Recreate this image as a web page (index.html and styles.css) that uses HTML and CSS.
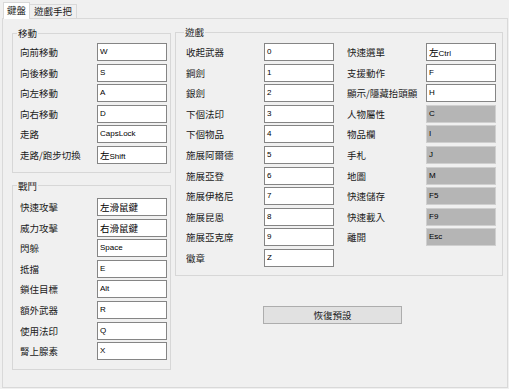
FILE: index.html
```html
<!DOCTYPE html>
<html lang="zh-Hant">
<head>
    <meta charset="UTF-8">
    <title>按鍵設定</title>
    <meta name="viewport" content="width=device-width, initial-scale=1.0">
    <link rel="stylesheet" href="styles.css">
</head>
<body>
    <div class="tabs">
        <div class="tab active">鍵盤</div>
        <div class="tab">遊戲手把</div>
    </div>

    <div class="panel">
        <div class="left-col">
            <fieldset class="group group-move">
                <legend>移動</legend>
                <div class="rows">
                    <span class="label">向前移動</span><span class="key">W</span>
                    <span class="label">向後移動</span><span class="key">S</span>
                    <span class="label">向左移動</span><span class="key">A</span>
                    <span class="label">向右移動</span><span class="key">D</span>
                    <span class="label">走路</span><span class="key">CapsLock</span>
                    <span class="label">走路/跑步切換</span><span class="key"><span class="zh">左</span>Shift</span>
                </div>
            </fieldset>

            <fieldset class="group group-combat">
                <legend>戰鬥</legend>
                <div class="rows">
                    <span class="label">快速攻擊</span><span class="key"><span class="zh">左滑鼠鍵</span></span>
                    <span class="label">威力攻擊</span><span class="key"><span class="zh">右滑鼠鍵</span></span>
                    <span class="label">閃躲</span><span class="key">Space</span>
                    <span class="label">抵擋</span><span class="key">E</span>
                    <span class="label">鎖住目標</span><span class="key">Alt</span>
                    <span class="label">額外武器</span><span class="key">R</span>
                    <span class="label">使用法印</span><span class="key">Q</span>
                    <span class="label">腎上腺素</span><span class="key">X</span>
                </div>
            </fieldset>
        </div>

        <div class="right-col">
            <fieldset class="group group-game">
                <legend>遊戲</legend>
                <div class="game-grid">
                    <div class="rows rows-first">
                        <span class="label">收起武器</span><span class="key">0</span>
                        <span class="label">鋼劍</span><span class="key">1</span>
                        <span class="label">銀劍</span><span class="key">2</span>
                        <span class="label">下個法印</span><span class="key">3</span>
                        <span class="label">下個物品</span><span class="key">4</span>
                        <span class="label">施展阿爾德</span><span class="key">5</span>
                        <span class="label">施展亞登</span><span class="key">6</span>
                        <span class="label">施展伊格尼</span><span class="key">7</span>
                        <span class="label">施展昆恩</span><span class="key">8</span>
                        <span class="label">施展亞克席</span><span class="key">9</span>
                        <span class="label">徽章</span><span class="key">Z</span>
                    </div>
                    <div class="rows rows-second">
                        <span class="label">快速選單</span><span class="key"><span class="zh">左</span>Ctrl</span>
                        <span class="label">支援動作</span><span class="key">F</span>
                        <span class="label">顯示/隱藏抬頭顯</span><span class="key">H</span>
                        <span class="label">人物屬性</span><span class="key off">C</span>
                        <span class="label">物品欄</span><span class="key off">I</span>
                        <span class="label">手札</span><span class="key off">J</span>
                        <span class="label">地圖</span><span class="key off">M</span>
                        <span class="label">快速儲存</span><span class="key off">F5</span>
                        <span class="label">快速載入</span><span class="key off">F9</span>
                        <span class="label">離開</span><span class="key off">Esc</span>
                    </div>
                </div>
            </fieldset>

            <button class="reset-button">恢復預設</button>
        </div>
    </div>
</body>
</html>
```

FILE: styles.css
```css
* {
    margin: 0;
    padding: 0;
    box-sizing: border-box;
}

body {
    background: #f0f0f0;
    color: #1a1a1a;
    font-family: "Noto Sans CJK TC", "Liberation Sans", sans-serif;
    font-size: 9.5px;
    width: 509px;
    height: 389px;
    overflow: hidden;
}

/* tabs */
.tabs {
    display: flex;
    align-items: flex-end;
    height: 18px;
    padding-left: 3px;
}

.tab {
    position: relative;
    height: 14px;
    line-height: 12px;
    padding: 0 4px;
    border: 1px solid #d9d9d9;
    border-bottom: none;
    background: #f0f0f0;
    white-space: nowrap;
}

.tab.active {
    height: 17px;
    line-height: 14px;
    padding: 0 3px;
    margin-bottom: -1px;
    background: #fff;
    z-index: 1;
}

.tab.active + .tab {
    border-left: none;
}

/* panel */
.panel {
    display: flex;
    gap: 4px;
    margin-left: 2px;
    width: 506px;
    height: 370px;
    padding: 7px 0 0 9px;
    border: 1px solid #d9d9d9;
    background: #f0f0f0;
}

.left-col {
    width: 159px;
}

.right-col {
    width: 328px;
    margin-top: -1px;
}

/* group box */
.group {
    border: 1px solid #d7d7d7;
    min-width: 0;
    margin: 0;
}

.group legend {
    font-size: 9.5px;
    line-height: 14px;
    padding: 0 1px;
    margin-left: -3px;
}

.group-move {
    padding: 3px 0 8px 7px;
}

.group-combat {
    margin-top: 6px;
    padding: 5px 0 9px 7px;
}

.group-game {
    padding: 4px 0 8px 10px;
}

.group-game legend {
    margin-left: -2px;
}

/* label + key rows */
.rows {
    display: grid;
    grid-template-columns: 77px 70px;
    grid-auto-rows: 18px;
    row-gap: 2.6px;
    align-items: center;
}

.game-grid {
    display: flex;
    align-items: flex-start;
}

.rows-first {
    grid-template-columns: 78px 70px;
}

.rows-second {
    grid-template-columns: 79px 70px;
    margin-left: 13px;
}

.label {
    white-space: nowrap;
    overflow: hidden;
    line-height: 14px;
}

.key {
    display: block;
    width: 70px;
    height: 18px;
    padding-left: 2px;
    border: 1px solid #858585;
    background: #fff;
    color: #000;
    font-family: "Liberation Sans", "Noto Sans CJK TC", sans-serif;
    font-size: 8px;
    line-height: 16px;
    white-space: nowrap;
}

.key .zh {
    font-family: "Noto Sans CJK TC", sans-serif;
    font-size: 9.5px;
}

.key.off {
    background: #b5b5b5;
    border-color: #cfcfcf;
}

/* button */
.reset-button {
    display: block;
    width: 139px;
    height: 18px;
    margin: 30px 0 0 88px;
    background: #e1e1e1;
    border: 1px solid #adadad;
    color: #222;
    font-family: "Noto Sans CJK TC", sans-serif;
    font-size: 9.5px;
    line-height: 14px;
    cursor: pointer;
}

.reset-button:hover {
    background: #e5f1fb;
    border-color: #0078d7;
}
```
